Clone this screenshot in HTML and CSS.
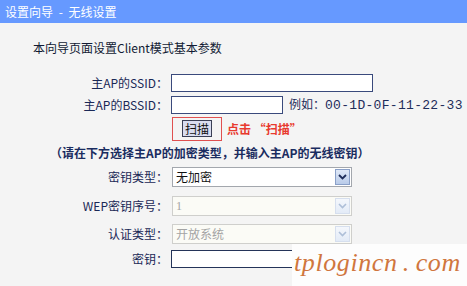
FILE: index.html
```html
<!DOCTYPE html>
<html lang="zh-CN">
<head>
<meta charset="utf-8">
<title>设置向导 - 无线设置</title>
<link rel="stylesheet" href="styles.css">
</head>
<body>
<div class="header">设置向导 - 无线设置</div>
<div class="intro">本向导页面设置Client模式基本参数</div>
<div class="form">
  <div class="row r1">
    <div class="label">主AP的SSID：</div>
    <div class="input wide"></div>
  </div>
  <div class="row r2">
    <div class="label">主AP的BSSID：</div>
    <div class="input narrow"></div>
    <div class="hint">例如：<span class="mac">00-1D-0F-11-22-33</span></div>
  </div>
  <div class="row r3">
    <div class="label"></div>
    <div class="redbox"><div class="btn">扫描</div></div>
    <div class="redtip">点击 “扫描”</div>
  </div>
  <div class="note">（请在下方选择主AP的加密类型，并输入主AP的无线密钥）</div>
  <div class="row r4">
    <div class="label">密钥类型：</div>
    <div class="select">
      <span class="sel-text">无加密</span>
      <span class="arrow"><svg width="9" height="6" viewBox="0 0 9 6"><path d="M1 1 L4.5 4.5 L8 1" fill="none" stroke="#1e2d5a" stroke-width="1.8"/></svg></span>
    </div>
  </div>
  <div class="row r5">
    <div class="label">WEP密钥序号：</div>
    <div class="select disabled">
      <span class="sel-text serif">1</span>
      <span class="arrow"><svg width="9" height="6" viewBox="0 0 9 6"><path d="M1 1 L4.5 4.5 L8 1" fill="none" stroke="#aebfd8" stroke-width="1.6"/></svg></span>
    </div>
  </div>
  <div class="row r6">
    <div class="label">认证类型：</div>
    <div class="select disabled">
      <span class="sel-text">开放系统</span>
      <span class="arrow"><svg width="9" height="6" viewBox="0 0 9 6"><path d="M1 1 L4.5 4.5 L8 1" fill="none" stroke="#aebfd8" stroke-width="1.6"/></svg></span>
    </div>
  </div>
  <div class="row r7">
    <div class="label">密钥：</div>
    <div class="input wide key"></div>
  </div>
</div>
<div class="watermark">tplogincn<span class="dot">.</span>com</div>
</body>
</html>
```
FILE: styles.css
```css
html, body {
  margin: 0;
  padding: 0;
}
body {
  width: 467px;
  height: 286px;
  overflow: hidden;
  background: #f4f4f4;
  font-family: "Noto Sans CJK SC", "Noto Sans", sans-serif;
  font-size: 12px;
  color: #1e2d5a;
  position: relative;
}
.header {
  height: 23px;
  line-height: 23px;
  background: #6699ff;
  color: #ffffff;
  font-size: 12px;
  padding-left: 5px;
  word-spacing: 3px;
}
.intro {
  margin-top: 17px;
  height: 16px;
  line-height: 16px;
  padding-left: 33px;
  color: #111a33;
}
.form {
  margin-top: 17px;
  display: flex;
  flex-direction: column;
}
.row {
  display: flex;
  align-items: center;
}
.r1 { height: 20px; }
.r2 { height: 20px; margin-top: 2px; }
.r3 { height: 25px; margin-top: 1px; }
.r4 { height: 22px; margin-top: 5px; }
.r5 { height: 22px; margin-top: 7px; }
.r6 { height: 22px; margin-top: 6px; }
.r7 { height: 20px; margin-top: 4px; }
.label {
  width: 168px;
  margin-right: 2px;
  flex: none;
  text-align: right;
  line-height: 16px;
  color: #1a2856;
}
.input {
  margin-left: 1px;
  height: 16px;
  border: 1px solid #3a4a7c;
  background: #ffffff;
  box-sizing: content-box;
}
.input.wide { width: 200px; }
.input.narrow { width: 110px; }
.input.key { border-color: #243459; }
.hint {
  margin-left: 6px;
  line-height: 16px;
}
.mac {
  font-family: "Liberation Mono", monospace;
  font-size: 13px;
  letter-spacing: 0.3px;
}
.redbox {
  margin-left: 2px;
  width: 48px;
  height: 22px;
  border: 1px solid #e05050;
  display: flex;
  align-items: center;
  justify-content: center;
}
.btn {
  width: 28px;
  height: 15px;
  line-height: 15px;
  border: 1px solid #3a3f55;
  background: #d9ddf0;
  color: #111111;
  text-align: center;
  font-size: 12px;
}
.redtip {
  margin-left: 5px;
  color: #e83a2e;
  font-weight: bold;
  line-height: 16px;
}
.note {
  margin-top: 4px;
  height: 16px;
  line-height: 16px;
  padding-left: 50px;
  font-weight: bold;
  color: #1a2c60;
}
.select {
  margin-left: 2px;
  width: 178px;
  height: 18px;
  border: 1px solid #a3a7ad;
  background: #ffffff;
  display: flex;
  align-items: center;
  justify-content: space-between;
}
.sel-text {
  padding-left: 3px;
  color: #111111;
  line-height: 16px;
}
.arrow {
  width: 15px;
  height: 16px;
  margin-right: 1px;
  border: 1px solid #8aa0c8;
  background: linear-gradient(#dfe8f7, #b9cbe9);
  display: flex;
  align-items: center;
  justify-content: center;
  box-sizing: border-box;
}
.select.disabled {
  border-color: #cfcfcc;
  background: #fbfbf6;
}
.select.disabled .sel-text {
  color: #a4a4a4;
}
.select.disabled .arrow {
  border-color: #d6dfee;
  background: linear-gradient(#f4f7fc, #e3ebf7);
}
.serif {
  font-family: "Liberation Serif", serif;
}
.watermark {
  position: absolute;
  left: 292px;
  top: 244px;
  width: 175px;
  height: 42px;
  background: #fdfdfd;
  color: #d0763e;
  font-family: "Liberation Serif", serif;
  font-style: italic;
  font-size: 26px;
  line-height: 38px;
  padding-left: 2px;
  box-sizing: border-box;
  letter-spacing: 0.6px;
  white-space: nowrap;
}
.dot {
  margin: 0 6px 0 5px;
}
```
